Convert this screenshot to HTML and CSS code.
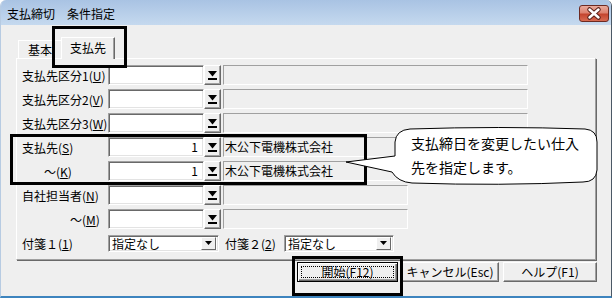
FILE: index.html
```html
<!DOCTYPE html>
<html lang="ja">
<head>
<meta charset="utf-8">
<title>支払締切 条件指定</title>
<link rel="stylesheet" href="styles.css">
</head>
<body>
<div class="window">
  <div class="titlebar">
    <span class="title">支払締切　条件指定</span>
    <span class="close">
      <svg width="30" height="17" viewBox="0 0 30 17"><path d="M10.5 4.5L19.5 12.5M19.5 4.5L10.5 12.5" stroke="#5a2019" stroke-width="4.5" stroke-linecap="round"/><path d="M10.5 4.5L19.5 12.5M19.5 4.5L10.5 12.5" stroke="#fff" stroke-width="2.5" stroke-linecap="round"/></svg>
    </span>
  </div>
  <div class="client">
    <div class="tabs">
      <div class="tab">基本</div>
      <div class="tab active">支払先</div>
    </div>
    <div class="panel">
      <div class="row">
        <span class="lbl">支払先区分1(<u>U</u>)</span>
        <span class="input"></span>
        <span class="ddbtn"><svg width="9" height="9" viewBox="0 0 9 9"><path d="M0 0H9L4.5 5.5Z"/><rect x="0" y="7" width="9" height="2"/></svg></span>
        <span class="disp wide"></span>
      </div>
      <div class="row">
        <span class="lbl">支払先区分2(<u>V</u>)</span>
        <span class="input"></span>
        <span class="ddbtn"><svg width="9" height="9" viewBox="0 0 9 9"><path d="M0 0H9L4.5 5.5Z"/><rect x="0" y="7" width="9" height="2"/></svg></span>
        <span class="disp wide"></span>
      </div>
      <div class="row">
        <span class="lbl">支払先区分3(<u>W</u>)</span>
        <span class="input"></span>
        <span class="ddbtn"><svg width="9" height="9" viewBox="0 0 9 9"><path d="M0 0H9L4.5 5.5Z"/><rect x="0" y="7" width="9" height="2"/></svg></span>
        <span class="disp wide"></span>
      </div>
      <div class="row">
        <span class="lbl">支払先(<u>S</u>)</span>
        <span class="input">1</span>
        <span class="ddbtn"><svg width="9" height="9" viewBox="0 0 9 9"><path d="M0 0H9L4.5 5.5Z"/><rect x="0" y="7" width="9" height="2"/></svg></span>
        <span class="disp">木公下電機株式会社</span>
      </div>
      <div class="row">
        <span class="lbl ind1">～(<u>K</u>)</span>
        <span class="input">1</span>
        <span class="ddbtn"><svg width="9" height="9" viewBox="0 0 9 9"><path d="M0 0H9L4.5 5.5Z"/><rect x="0" y="7" width="9" height="2"/></svg></span>
        <span class="disp">木公下電機株式会社</span>
      </div>
      <div class="row">
        <span class="lbl">自社担当者(<u>N</u>)</span>
        <span class="input"></span>
        <span class="ddbtn"><svg width="9" height="9" viewBox="0 0 9 9"><path d="M0 0H9L4.5 5.5Z"/><rect x="0" y="7" width="9" height="2"/></svg></span>
        <span class="disp"></span>
      </div>
      <div class="row">
        <span class="lbl ind2">～(<u>M</u>)</span>
        <span class="input"></span>
        <span class="ddbtn"><svg width="9" height="9" viewBox="0 0 9 9"><path d="M0 0H9L4.5 5.5Z"/><rect x="0" y="7" width="9" height="2"/></svg></span>
        <span class="disp"></span>
      </div>
      <div class="row">
        <span class="lbl">付箋１(<u>1</u>)</span>
        <span class="combo c1"><span class="ctext">指定なし</span><span class="cbtn"><svg width="7" height="4" viewBox="0 0 7 4"><path d="M0 0H7L3.5 4Z"/></svg></span></span>
        <span class="lbl2">付箋２(<u>2</u>)</span>
        <span class="combo c2"><span class="ctext">指定なし</span><span class="cbtn"><svg width="7" height="4" viewBox="0 0 7 4"><path d="M0 0H7L3.5 4Z"/></svg></span></span>
      </div>
    </div>
    <div class="buttons">
      <span class="btn default"><span class="focus">開始(F12)</span></span>
      <span class="btn cancel">キャンセル(Esc)</span>
      <span class="btn help">ヘルプ(F1)</span>
    </div>
  </div>

  <div class="hl hl-tab"></div>
  <div class="hl hl-rows"></div>
  <div class="hl hl-btn"></div>

  <div class="bubble">
    <svg class="bubble-shape" width="264" height="66" viewBox="339 123 264 66">
      <path d="M410 129 Q500 126 585 129 Q597 130 597 142 L597 170 Q596 182 583 182 Q500 186 412 183 Q398 182 392 172 L346 162 L395 156 L395 142 Q396 130 410 129 Z" fill="#fff" stroke="#000" stroke-width="1"/>
    </svg>
    <div class="bubble-text">支払締日を変更したい仕入<br>先を指定します。</div>
  </div>
</div>
</body>
</html>
```

FILE: styles.css
```css
* { box-sizing: border-box; }
html, body { margin: 0; padding: 0; background: #fff; }
body {
  width: 615px;
  height: 298px;
  overflow: hidden;
  font-family: "Noto Sans CJK JP", "Noto Sans", sans-serif;
  font-size: 12px;
  color: #000;
}
u { text-decoration: underline; text-underline-offset: 1px; }

.window {
  position: relative;
  width: 612px;
  height: 298px;
  background: #efefef;
  border-left: 1px solid #b7cbe2;
  border-right: 1px solid #4b5866;
  border-bottom: 2px solid #3d84be;
  border-radius: 6px 6px 0 0;
  overflow: hidden;
}

.titlebar {
  height: 25px;
  display: flex;
  align-items: flex-start;
  padding-left: 6px;
  background: linear-gradient(#a9c3e3, #c5d9ef);
}
.title {
  margin-top: 5px;
  line-height: 17px;
  font-size: 12px;
}
.close {
  margin-left: auto;
  margin-right: 2px;
  margin-top: 5px;
  width: 30px;
  height: 17px;
  border: 1px solid #6d2a22;
  border-radius: 3px;
  background: linear-gradient(#e9aa9c 0%, #dd8270 45%, #c4452f 55%, #d86a52 100%);
  display: flex;
  align-items: center;
  justify-content: center;
}
.close svg { display: block; margin: -1px; }

.client {
  padding: 12px 0 0 15px;
}

.tabs {
  display: flex;
  align-items: flex-end;
  height: 21px;
  padding-left: 2px;
}
.tab {
  width: 44px;
  height: 18px;
  border-top: 1px solid #fff;
  border-left: 1px solid #fff;
  border-right: 1px solid #a0a0a0;
  text-align: center;
  line-height: 17px;
}
.tab.active {
  position: relative;
  z-index: 1;
  width: 54px;
  height: 22px;
  margin-left: -1px;
  margin-bottom: -1px;
  background: #efefef;
  border-right: 1px solid #696969;
  box-shadow: inset -1px 0 0 #a0a0a0;
  line-height: 19px;
}

.panel {
  width: 580px;
  height: 202px;
  border-top: 1px solid #fff;
  border-left: 1px solid #fff;
  border-right: 1px solid #a0a0a0;
  border-bottom: 1px solid #a0a0a0;
  box-shadow: 1px 1px 0 #696969;
  padding: 4px 0 0 5px;
}

.row {
  display: flex;
  align-items: center;
  height: 24px;
}
.lbl {
  width: 86px;
  white-space: nowrap;
  line-height: 17px;
}
.lbl.ind1 { padding-left: 22px; }
.lbl.ind2 { padding-left: 48px; }

.input {
  width: 96px;
  height: 20px;
  background: #fff;
  border-top: 1px solid #a0a0a0;
  border-left: 1px solid #a0a0a0;
  border-right: 1px solid #fff;
  border-bottom: 1px solid #fff;
  box-shadow: inset 1px 1px 0 #696969, inset -1px -1px 0 #e3e3e3;
  text-align: right;
  padding-right: 5px;
  line-height: 18px;
}
.ddbtn {
  width: 17px;
  height: 20px;
  background: #efefef;
  border-top: 1px solid #fff;
  border-left: 1px solid #fff;
  border-right: 1px solid #696969;
  border-bottom: 1px solid #696969;
  box-shadow: inset -1px -1px 0 #a0a0a0;
  display: flex;
  align-items: center;
  justify-content: center;
}
.ddbtn svg { display: block; fill: #000; margin-right: 1px; }

.disp {
  width: 185px;
  height: 20px;
  margin-left: 2px;
  border-top: 1px solid #a0a0a0;
  border-left: 1px solid #a0a0a0;
  border-right: 1px solid #fff;
  border-bottom: 1px solid #fff;
  padding-left: 1px;
  line-height: 18px;
  white-space: nowrap;
}
.disp.wide { width: 305px; }

.combo {
  display: flex;
  align-items: center;
  height: 17px;
  background: #fff;
  border-top: 1px solid #a0a0a0;
  border-left: 1px solid #a0a0a0;
  border-right: 1px solid #fff;
  border-bottom: 1px solid #fff;
  box-shadow: inset 1px 1px 0 #696969, inset -1px -1px 0 #e3e3e3;
  padding: 0 2px 0 3px;
}
.combo.c1 { width: 111px; }
.combo.c2 { width: 110px; }
.ctext { flex: 1; line-height: 15px; white-space: nowrap; }
.cbtn {
  width: 15px;
  height: 13px;
  background: #efefef;
  border-top: 1px solid #fff;
  border-left: 1px solid #fff;
  border-right: 1px solid #696969;
  border-bottom: 1px solid #696969;
  display: flex;
  align-items: center;
  justify-content: center;
}
.cbtn svg { display: block; fill: #000; }
.lbl2 {
  margin-left: 6px;
  width: 59px;
  white-space: nowrap;
  line-height: 17px;
}

.buttons {
  display: flex;
  margin-top: 2px;
  padding-left: 281px;
}
.btn {
  height: 20px;
  background: #efefef;
  border-top: 1px solid #fff;
  border-left: 1px solid #fff;
  border-right: 1px solid #696969;
  border-bottom: 1px solid #696969;
  box-shadow: inset -1px -1px 0 #a0a0a0;
  display: flex;
  align-items: center;
  justify-content: center;
  line-height: 16px;
  white-space: nowrap;
}
.btn.default {
  width: 101px;
  border: 1px solid #000;
  box-shadow: inset 1px 1px 0 #fff, inset -1px -1px 0 #696969, inset -2px -2px 0 #a0a0a0;
  padding: 3px;
}
.focus {
  flex: 1;
  align-self: stretch;
  border: 1px dotted #000;
  display: flex;
  align-items: center;
  justify-content: center;
}
.btn.cancel { width: 98px; margin-left: 3px; }
.btn.help { width: 94px; margin-left: 4px; }

.hl {
  position: absolute;
  border: 3px solid #000;
}
.hl-tab { left: 51px; top: 26px; width: 75px; height: 42px; }
.hl-rows { left: 9px; top: 134px; width: 357px; height: 51px; }
.hl-btn { left: 291px; top: 256px; width: 111px; height: 40px; }

.bubble {
  position: absolute;
  left: 338px;
  top: 123px;
  width: 264px;
  height: 66px;
}
.bubble-shape { position: absolute; left: 0; top: 0; display: block; }
.bubble-text {
  position: absolute;
  left: 72px;
  top: 8px;
  font-size: 14px;
  line-height: 24px;
  white-space: nowrap;
}
```
